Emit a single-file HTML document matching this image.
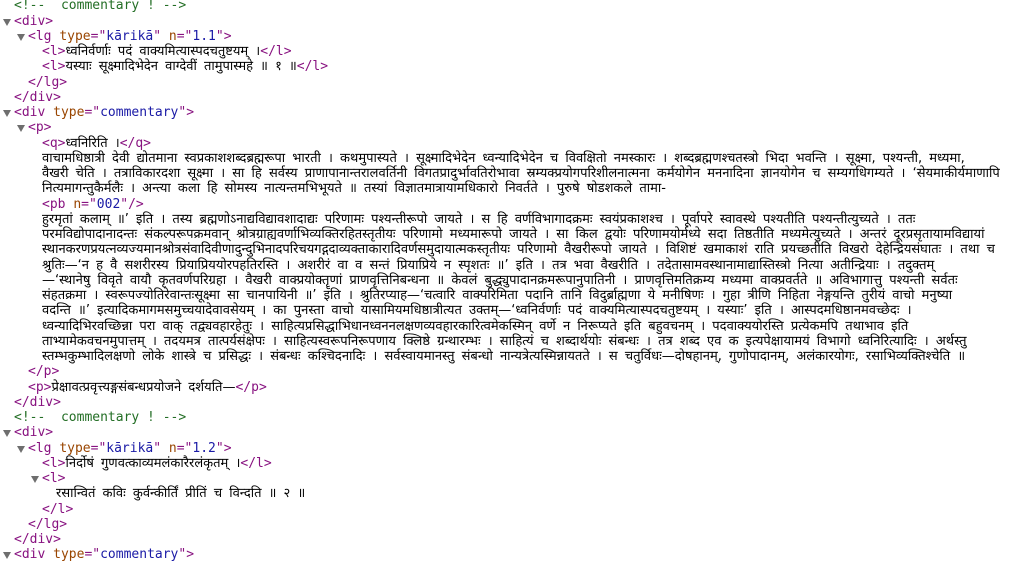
<!DOCTYPE html>
<html><head><meta charset="utf-8"><style>
html,body{margin:0;padding:0;background:#fff;width:1010px;height:555px;overflow:hidden}
body{font-family:"DejaVu Sans Mono","Liberation Mono",monospace;font-size:13px;color:#000}
.w{position:absolute;top:-1.6px;left:0}
.l{height:15.25px;line-height:15.25px;white-space:pre;position:relative}
.t{color:#881280}.a{color:#994500}.v{color:#1a1aa6}.c{color:#236e25}
.d{font-family:"DejaVu Sans","Liberation Sans",sans-serif;font-size:13px;word-spacing:3px;white-space:nowrap}
.tri{position:absolute;top:5px;width:0;height:0;border-left:4px solid transparent;border-right:4px solid transparent;border-top:7px solid #6e6e6e}
</style></head><body><div class="w">
<div class="l" style="padding-left:14px"><span class="c">&lt;!--  commentary ! --&gt;</span></div>
<div class="l" style="padding-left:14px"><span class="tri" style="left:3px"></span><span class="t">&lt;div&gt;</span></div>
<div class="l" style="padding-left:28px"><span class="tri" style="left:17px"></span><span class="t">&lt;lg </span><span class="a">type</span><span class="t">="</span><span class="v">kārikā</span><span class="t">" </span><span class="a">n</span><span class="t">="</span><span class="v">1.1</span><span class="t">"&gt;</span></div>
<div class="l" style="padding-left:42px"><span class="t">&lt;l&gt;</span><span class="d">ध्वनिर्वर्णाः पदं वाक्यमित्यास्पदचतुष्टयम् ।</span><span class="t">&lt;/l&gt;</span></div>
<div class="l" style="padding-left:42px"><span class="t">&lt;l&gt;</span><span class="d">यस्याः सूक्ष्मादिभेदेन वाग्देवीं तामुपास्महे ॥ १ ॥</span><span class="t">&lt;/l&gt;</span></div>
<div class="l" style="padding-left:28px"><span class="t">&lt;/lg&gt;</span></div>
<div class="l" style="padding-left:14px"><span class="t">&lt;/div&gt;</span></div>
<div class="l" style="padding-left:14px"><span class="tri" style="left:3px"></span><span class="t">&lt;div </span><span class="a">type</span><span class="t">="</span><span class="v">commentary</span><span class="t">"&gt;</span></div>
<div class="l" style="padding-left:28px"><span class="tri" style="left:17px"></span><span class="t">&lt;p&gt;</span></div>
<div class="l" style="padding-left:42px"><span class="t">&lt;q&gt;</span><span class="d">ध्वनिरिति ।</span><span class="t">&lt;/q&gt;</span></div>
<div class="l d" style="padding-left:42px">वाचामधिष्ठात्री देवी द्योतमाना स्वप्रकाशशब्दब्रह्मरूपा भारती । कथमुपास्यते । सूक्ष्मादिभेदेन ध्वन्यादिभेदेन च विवक्षितो नमस्कारः । शब्दब्रह्मणश्चतस्त्रो भिदा भवन्ति । सूक्ष्मा, पश्यन्ती, मध्यमा,</div>
<div class="l d" style="padding-left:42px">वैखरी चेति । तत्राविकारदशा सूक्ष्मा । सा हि सर्वस्य प्राणापानान्तरालवर्तिनी विगतप्रादुर्भावतिरोभावा स्रम्यक्प्रयोगपरिशीलनात्मना कर्मयोगेन मननादिना ज्ञानयोगेन च सम्यगधिगम्यते । ‘सेयमाकीर्यमाणापि</div>
<div class="l d" style="padding-left:42px">नित्यमागन्तुकैर्मलैः । अन्त्या कला हि सोमस्य नात्यन्तमभिभूयते ॥ तस्यां विज्ञातमात्रायामधिकारो निवर्तते । पुरुषे षोडशकले तामा-</div>
<div class="l" style="padding-left:42px"><span class="t">&lt;pb </span><span class="a">n</span><span class="t">="</span><span class="v">002</span><span class="t">"/&gt;</span></div>
<div class="l d" style="padding-left:42px">हुरमृतां कलाम् ॥’ इति । तस्य ब्रह्मणोऽनाद्यविद्यावशादाद्यः परिणामः पश्यन्तीरूपो जायते । स हि वर्णविभागादक्रमः स्वयंप्रकाशश्च । पूर्वापरे स्वावस्थे पश्यतीति पश्यन्तीत्युच्यते । ततः</div>
<div class="l d" style="padding-left:42px">परमविद्योपादानादन्तः संकल्परूपक्रमवान् श्रोत्रग्राह्यवर्णाभिव्यक्तिरहितस्तृतीयः परिणामो मध्यमारूपो जायते । सा किल द्वयोः परिणामयोर्मध्ये सदा तिष्ठतीति मध्यमेत्युच्यते । अन्तरं दूरप्रसृतायामविद्यायां</div>
<div class="l d" style="padding-left:42px">स्थानकरणप्रयत्नव्यज्यमानश्रोत्रसंवादिवीणादुन्दुभिनादपरिचयगद्गदाव्यक्ताकारादिवर्णसमुदायात्मकस्तृतीयः परिणामो वैखरीरूपो जायते । विशिष्टं खमाकाशं राति प्रयच्छतीति विखरो देहेन्द्रियसंघातः । तथा च</div>
<div class="l d" style="padding-left:42px">श्रुतिः—‘न ह वै सशरीरस्य प्रियाप्रिययोरपहतिरस्ति । अशरीरं वा व सन्तं प्रियाप्रिये न स्पृशतः ॥’ इति । तत्र भवा वैखरीति । तदेतासामवस्थानामाद्यास्तिस्त्रो नित्या अतीन्द्रियाः । तदुक्तम्</div>
<div class="l d" style="padding-left:42px">—‘स्थानेषु विवृते वायौ कृतवर्णपरिग्रहा । वैखरी वाक्प्रयोक्तॄणां प्राणवृत्तिनिबन्धना ॥ केवलं बुद्ध्युपादानक्रमरूपानुपातिनी । प्राणवृत्तिमतिक्रम्य मध्यमा वाक्प्रवर्तते ॥ अविभागात्तु पश्यन्ती सर्वतः</div>
<div class="l d" style="padding-left:42px">संहतक्रमा । स्वरूपज्योतिरेवान्तःसूक्ष्मा सा चानपायिनी ॥’ इति । श्रुतिरप्याह—‘चत्वारि वाक्परिमिता पदानि तानि विदुर्ब्राह्मणा ये मनीषिणः । गुहा त्रीणि निहिता नेङ्गयन्ति तुरीयं वाचो मनुष्या</div>
<div class="l d" style="padding-left:42px">वदन्ति ॥’ इत्यादिकमागमसमुच्चयादेवावसेयम् । का पुनस्ता वाचो यासामियमधिष्ठात्रीत्यत उक्तम्—‘ध्वनिर्वर्णाः पदं वाक्यमित्यास्पदचतुष्टयम् । यस्याः’ इति । आस्पदमधिष्ठानमवच्छेदः ।</div>
<div class="l d" style="padding-left:42px">ध्वन्यादिभिरवच्छिन्ना परा वाक् तद्व्यवहारहेतुः । साहित्यप्रसिद्धाभिधानध्वननलक्षणव्यवहारकारित्वमेकस्मिन् वर्णे न निरूप्यते इति बहुवचनम् । पदवाक्ययोरस्ति प्रत्येकमपि तथाभाव इति</div>
<div class="l d" style="padding-left:42px">ताभ्यामेकवचनमुपात्तम् । तदयमत्र तात्पर्यसंक्षेपः । साहित्यस्वरूपनिरूपणाय क्लिष्ठे ग्रन्थारम्भः । साहित्यं च शब्दार्थयोः संबन्धः । तत्र शब्द एव क इत्यपेक्षायामयं विभागो ध्वनिरित्यादिः । अर्थस्तु</div>
<div class="l d" style="padding-left:42px">स्तम्भकुम्भादिलक्षणो लोके शास्त्रे च प्रसिद्धः । संबन्धः कश्चिदनादिः । सर्वस्वायमानस्तु संबन्धो नान्यत्रेत्यस्मिन्नायतते । स चतुर्विधः—दोषहानम्, गुणोपादानम्, अलंकारयोगः, रसाभिव्यक्तिश्चेति ॥</div>
<div class="l" style="padding-left:28px"><span class="t">&lt;/p&gt;</span></div>
<div class="l" style="padding-left:28px"><span class="t">&lt;p&gt;</span><span class="d">प्रेक्षावत्प्रवृत्त्यङ्गसंबन्धप्रयोजने दर्शयति—</span><span class="t">&lt;/p&gt;</span></div>
<div class="l" style="padding-left:14px"><span class="t">&lt;/div&gt;</span></div>
<div class="l" style="padding-left:14px"><span class="c">&lt;!--  commentary ! --&gt;</span></div>
<div class="l" style="padding-left:14px"><span class="tri" style="left:3px"></span><span class="t">&lt;div&gt;</span></div>
<div class="l" style="padding-left:28px"><span class="tri" style="left:17px"></span><span class="t">&lt;lg </span><span class="a">type</span><span class="t">="</span><span class="v">kārikā</span><span class="t">" </span><span class="a">n</span><span class="t">="</span><span class="v">1.2</span><span class="t">"&gt;</span></div>
<div class="l" style="padding-left:42px"><span class="t">&lt;l&gt;</span><span class="d">निर्दोषं गुणवत्काव्यमलंकारैरलंकृतम् ।</span><span class="t">&lt;/l&gt;</span></div>
<div class="l" style="padding-left:42px"><span class="tri" style="left:31px"></span><span class="t">&lt;l&gt;</span></div>
<div class="l d" style="padding-left:56px">रसान्वितं कविः कुर्वन्कीर्तिं प्रीतिं च विन्दति ॥ २ ॥</div>
<div class="l" style="padding-left:42px"><span class="t">&lt;/l&gt;</span></div>
<div class="l" style="padding-left:28px"><span class="t">&lt;/lg&gt;</span></div>
<div class="l" style="padding-left:14px"><span class="t">&lt;/div&gt;</span></div>
<div class="l" style="padding-left:14px"><span class="tri" style="left:3px"></span><span class="t">&lt;div </span><span class="a">type</span><span class="t">="</span><span class="v">commentary</span><span class="t">"&gt;</span></div>
</div></body></html>
